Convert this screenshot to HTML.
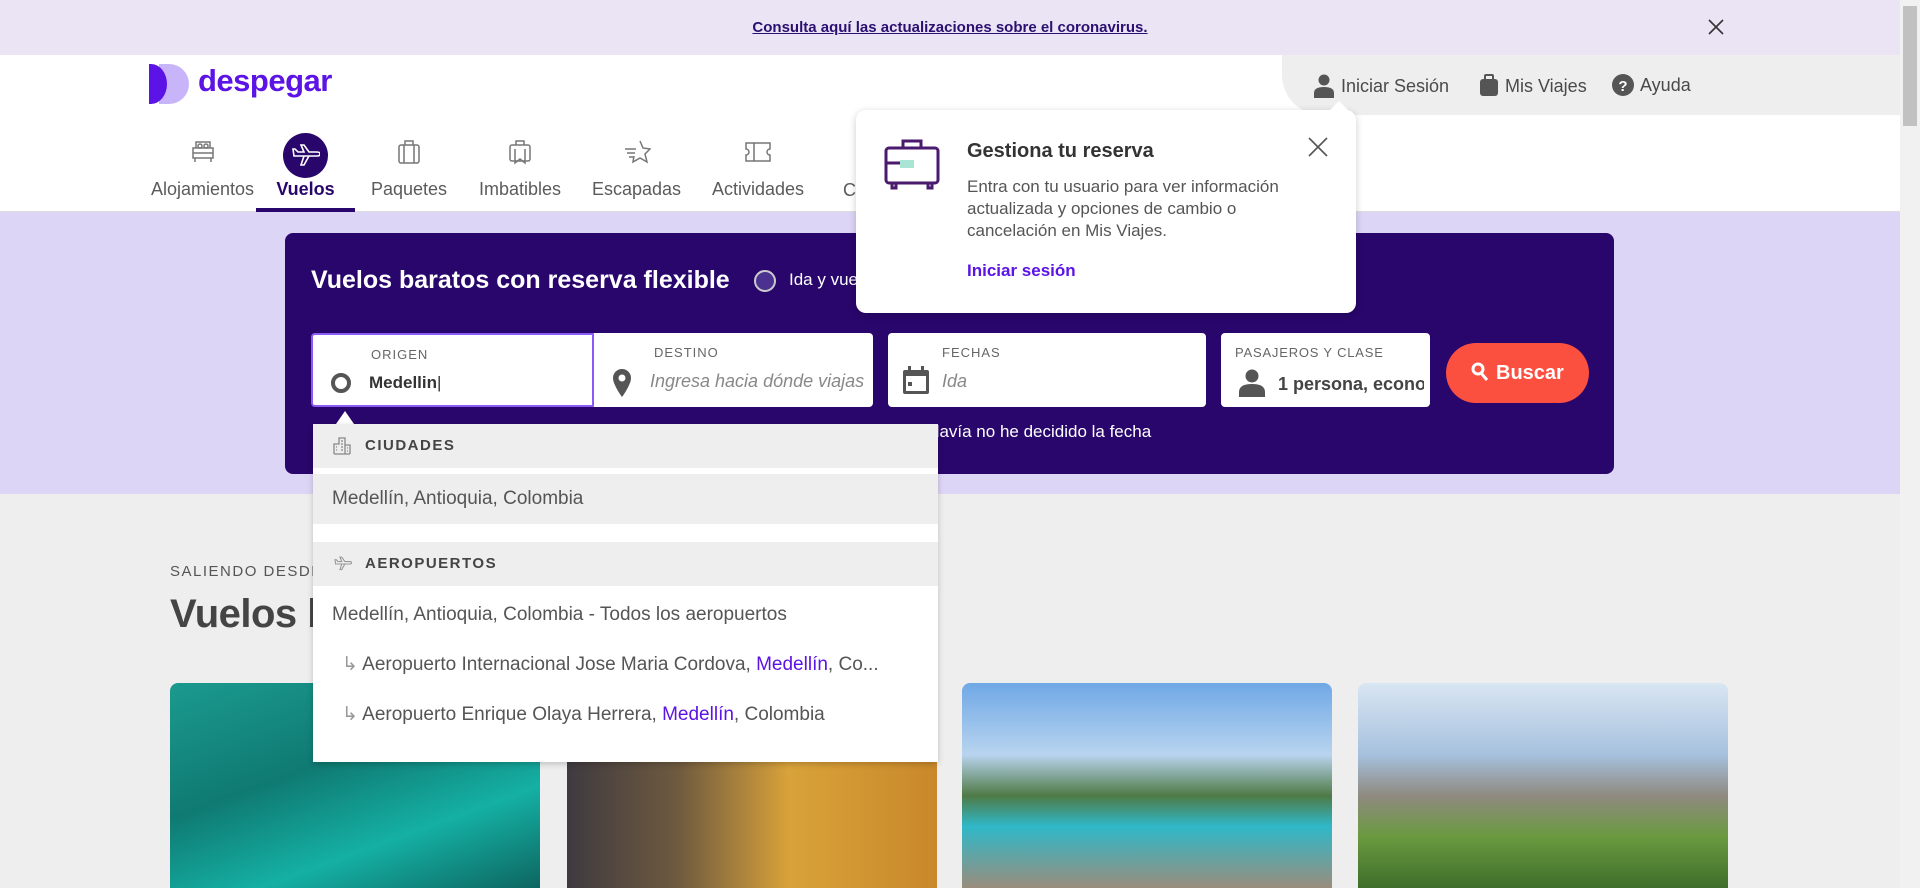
<!DOCTYPE html>
<html><head><meta charset="utf-8"><style>
*{box-sizing:border-box;margin:0;padding:0}
body{width:1920px;height:888px;overflow:hidden;font-family:"Liberation Sans",sans-serif;background:#eee;position:relative;color:#4d4d4d}
.abs{position:absolute}
.banner{left:0;top:0;width:1900px;height:55px;background:#ebe4f4;text-align:center;line-height:55px;font-size:15px;font-weight:bold;color:#2a1072}
.banner span{text-decoration:underline}
.header{left:0;top:55px;width:1900px;height:157px;background:#fff;border-bottom:1px solid #ddd}
.right{left:1282px;top:55px;width:618px;height:60px;background:#eee;border-bottom-left-radius:40px}
.right div{position:absolute;top:19px;font-size:18px;color:#4a4a4a;display:flex;align-items:center;gap:6px}
.nav{top:133px;text-align:center;font-size:18px;color:#5b5b5b}
.nav .ic{height:38px;display:flex;justify-content:center;align-items:center}
.band{left:0;top:212px;width:1900px;height:282px;background:#ddd5f5}
.box{left:285px;top:233px;width:1329px;height:241px;background:#29066b;border-radius:8px}
.inp{background:#fff;top:333px;height:74px;border-radius:4px}
.lbl{position:absolute;font-size:13px;letter-spacing:1px;color:#666;top:12px}
.val{position:absolute;top:38px;font-size:18px}
.dd{left:313px;top:424px;width:625px;height:338px;background:#fff;box-shadow:0 2px 6px rgba(0,0,0,.2);z-index:10}
.sec{height:44px;background:#eee;font-size:15px;font-weight:bold;letter-spacing:1.5px;color:#444;line-height:44px;padding-left:52px;position:relative}
.row{height:50px;line-height:50px;font-size:19px;color:#555;padding-left:19px}
.card{top:683px;width:370px;height:205px;border-radius:8px 8px 0 0;overflow:hidden}
.pop{left:856px;top:110px;width:500px;height:203px;background:#fff;border-radius:10px;box-shadow:0 2px 8px rgba(0,0,0,.2);z-index:10}
.sb{left:1900px;top:0;width:20px;height:888px;background:#f1f1f1}
</style></head><body>
<div class="abs banner"><span>Consulta aquí las actualizaciones sobre el coronavirus.</span></div>
<svg class="abs" style="left:1708px;top:19px" width="16" height="16" viewBox="0 0 16 16"><path d="M1 1L15 15M15 1L1 15" stroke="#333" stroke-width="1.6"/></svg>
<div class="abs header"></div>
<div class="abs right">
<div style="left:31px"><svg width="22" height="24" viewBox="0 0 22 24"><circle cx="11" cy="6" r="5.5" fill="#555"/><path d="M1 24v-5q0-6 10-6t10 6v5z" fill="#555"/></svg>Iniciar Sesión</div>
<div style="left:197px"><svg width="20" height="24" viewBox="0 0 20 24"><rect x="1" y="5" width="18" height="17" rx="3" fill="#555"/><rect x="6" y="1" width="8" height="5" rx="1" fill="none" stroke="#555" stroke-width="2"/></svg>Mis Viajes</div>
<div style="left:330px"><svg width="22" height="22" viewBox="0 0 22 22"><circle cx="11" cy="11" r="11" fill="#555"/><text x="11" y="17" font-size="15" font-weight="bold" fill="#fff" text-anchor="middle" font-family="Liberation Sans">?</text></svg>Ayuda</div>
</div>
<svg class="abs" style="left:149px;top:64px" width="42" height="40" viewBox="0 0 42 40"><path d="M10 0h10a20 20 0 0 1 0 40h-10z" fill="#c7b4f9"/><path d="M0 0h2a16 20 0 0 1 0 40h-2z" fill="#5b13e6"/></svg>
<div class="abs" style="left:198px;top:63px;font-size:31px;font-weight:bold;color:#5b13e6;letter-spacing:-.5px">despegar</div>
<div class="abs nav" style="left:149px;width:107px"><div class="ic"><svg width="26" height="24" viewBox="0 0 26 24" fill="none" stroke="#777" stroke-width="1.5"><rect x="3" y="8" width="20" height="10"/><path d="M3 13h20M5 18v4M21 18v4M6 8V2h14v6"/><circle cx="10" cy="6" r="2"/><circle cx="16" cy="6" r="2"/></svg></div><div style="margin-top:8px">Alojamientos</div></div>
<div class="abs" style="left:283px;top:133px;width:45px;height:45px;border-radius:50%;background:#29066b"></div>
<svg class="abs" style="left:292px;top:143px" width="28" height="26" viewBox="0 0 28 26" fill="none" stroke="#fff" stroke-width="1.6"><path d="M3 13h22q3 0 3-2t-3-2H17L12 2H9l3 7H6L3 6H1l1 7zM12 13l-3 9h3l5-9"/></svg>
<div class="abs" style="left:256px;top:179px;width:99px;text-align:center;font-size:18px;font-weight:bold;color:#29066b">Vuelos</div>
<div class="abs" style="left:256px;top:208px;width:99px;height:4px;background:#29066b"></div>
<div class="abs nav" style="left:369px;width:80px"><div class="ic"><svg width="24" height="26" viewBox="0 0 24 26" fill="none" stroke="#777" stroke-width="1.5"><rect x="2" y="6" width="20" height="18" rx="2"/><path d="M8 6V2h8v4M7 6v18M17 6v18"/></svg></div><div style="margin-top:8px">Paquetes</div></div>
<div class="abs nav" style="left:475px;width:90px"><div class="ic"><svg width="24" height="26" viewBox="0 0 24 26" fill="none" stroke="#777" stroke-width="1.5"><rect x="2" y="6" width="20" height="16" rx="2"/><path d="M8 6V2h8v4M7 10v14l5-4 5 4V10"/></svg></div><div style="margin-top:8px">Imbatibles</div></div>
<div class="abs nav" style="left:590px;width:93px"><div class="ic"><svg width="28" height="24" viewBox="0 0 28 24" fill="none" stroke="#777" stroke-width="1.5"><path d="M17 1l3 7 7 1-5 5 2 8-7-4-7 4 1-6M2 9h11M4 13h8M6 17h5"/></svg></div><div style="margin-top:8px">Escapadas</div></div>
<div class="abs nav" style="left:708px;width:100px"><div class="ic"><svg width="28" height="22" viewBox="0 0 28 22" fill="none" stroke="#777" stroke-width="1.5"><path d="M2 2h24v6a3 3 0 0 0 0 6v6H2v-6a3 3 0 0 0 0-6zM10 2v18"/></svg></div><div style="margin-top:8px">Actividades</div></div>
<div class="abs nav" style="left:843px;top:180px">C</div>
<div class="abs band"></div>
<div class="abs box"></div>
<div class="abs" style="left:311px;top:266px;font-size:25px;font-weight:bold;color:#fff">Vuelos baratos con reserva flexible</div>
<div class="abs" style="left:754px;top:270px;width:22px;height:22px;border-radius:50%;border:2px solid #ccc;background:#4b3190"></div>
<div class="abs" style="left:789px;top:270px;font-size:17px;color:#fff">Ida y vue</div>
<div class="abs inp" style="left:311px;width:283px;border:2px solid #8a5cf5;border-radius:4px 0 0 4px"><div class="lbl" style="left:58px">ORIGEN</div><div class="abs" style="left:18px;top:38px;width:20px;height:20px;border-radius:50%;border:4px solid #555"></div><div class="val" style="left:56px;color:#333;font-weight:bold;font-size:17px">Medellin<span style="font-weight:normal">|</span></div></div>
<div class="abs inp" style="left:594px;width:279px;border-radius:0 4px 4px 0"><div class="lbl" style="left:60px">DESTINO</div><svg class="abs" style="left:18px;top:36px" width="20" height="28" viewBox="0 0 20 28"><path d="M10 0a9 9 0 0 0-9 9c0 7 9 19 9 19s9-12 9-19a9 9 0 0 0-9-9z" fill="#555"/><circle cx="10" cy="9" r="3.5" fill="#fff"/></svg><div class="val" style="left:56px;font-style:italic;color:#888;white-space:nowrap;width:214px;overflow:hidden">Ingresa hacia dónde viajas</div></div>
<div class="abs inp" style="left:888px;width:318px"><div class="lbl" style="left:54px">FECHAS</div><svg class="abs" style="left:14px;top:32px" width="28" height="30" viewBox="0 0 28 30"><rect x="1" y="5" width="26" height="24" rx="2" fill="#555"/><rect x="4" y="11" width="20" height="15" fill="#fff"/><rect x="6" y="17" width="4" height="4" fill="#555"/><rect x="6" y="1" width="3" height="6" fill="#555"/><rect x="19" y="1" width="3" height="6" fill="#555"/></svg><div class="val" style="left:54px;font-style:italic;color:#888">Ida</div></div>
<div class="abs inp" style="left:1221px;width:209px"><div class="lbl" style="left:14px;letter-spacing:.8px">PASAJEROS Y CLASE</div><svg class="abs" style="left:18px;top:36px" width="26" height="28" viewBox="0 0 26 28"><circle cx="13" cy="7" r="6.5" fill="#555"/><path d="M0 28v-5q0-8 13-8t13 8v5z" fill="#555"/></svg><div class="val" style="left:57px;top:41px;font-weight:bold;color:#444;white-space:nowrap;width:146px;overflow:hidden">1 persona, economy</div></div>
<div class="abs" style="left:1446px;top:343px;width:143px;height:60px;border-radius:30px;background:#fb5040;color:#fff;font-size:20px;font-weight:bold;line-height:60px;padding-left:50px">Buscar</div>
<svg class="abs" style="left:1471px;top:362px" width="18" height="20" viewBox="0 0 18 20" fill="none" stroke="#fff" stroke-width="3"><circle cx="7" cy="7" r="5"/><path d="M10 11l6 7"/></svg>
<div class="abs" style="left:930px;top:422px;font-size:17px;color:#fff">davía no he decidido la fecha</div>
<div class="abs" style="left:170px;top:563px;font-size:15px;letter-spacing:1.5px;color:#555">SALIENDO DESDE</div>
<div class="abs" style="left:170px;top:592px;font-size:40px;font-weight:bold;color:#444;letter-spacing:-.5px">Vuelos baratos</div>
<div class="abs" style="left:915px;top:592px;font-size:40px;font-weight:bold;color:#444">s</div>
<div class="abs card" style="left:170px;background:linear-gradient(160deg,#1b9a8f,#0f7a72 40%,#15b0a4 70%,#0d6660)"></div>
<div class="abs card" style="left:567px;background:linear-gradient(90deg,#3f3a40,#6e5a3f 30%,#d9a23a 60%,#c9882a)"></div>
<div class="abs card" style="left:962px;background:linear-gradient(180deg,#6fa8e6 0%,#b8d4ef 35%,#4f7a46 55%,#2fb8c8 70%,#9a8d7d 100%)"></div>
<div class="abs card" style="left:1358px;background:linear-gradient(180deg,#d9e6f2 0%,#a6c1de 35%,#8f8a80 55%,#6a9a3f 75%,#3e6e2a 100%)"></div>
<div class="abs" style="left:336px;top:411px;width:0;height:0;border-left:9px solid transparent;border-right:9px solid transparent;border-bottom:13px solid #fff;z-index:10"></div>
<div class="abs dd">
<div class="sec"><svg class="abs" style="left:20px;top:13px" width="18" height="18" viewBox="0 0 18 18" fill="none" stroke="#888" stroke-width="1.3"><path d="M1 17V7h5V1h6v16M12 8h5v9M1 17h16M3 10h1M3 13h1M8 4h2M8 7h2M8 10h2M8 13h2M14 11h1M14 14h1"/></svg>CIUDADES</div>
<div style="height:6px"></div>
<div class="row" style="background:#eee">Medellín, Antioquia, Colombia</div>
<div style="height:18px"></div>
<div class="sec"><svg class="abs" style="left:20px;top:14px" width="20" height="16" viewBox="0 0 28 26" fill="none" stroke="#999" stroke-width="1.8"><path d="M3 13h22q3 0 3-2t-3-2H17L12 2H9l3 7H6L3 6H1l1 7zM12 13l-3 9h3l5-9"/></svg>AEROPUERTOS</div>
<div class="row" style="margin-top:4px">Medellín, Antioquia, Colombia - Todos los aeropuertos</div>
<div class="row" style="padding-left:29px;white-space:nowrap"><span style="color:#999">↳ </span>Aeropuerto Internacional Jose Maria Cordova, <span style="color:#5b13e6">Medellín</span>, Co...</div>
<div class="row" style="padding-left:29px"><span style="color:#999">↳ </span>Aeropuerto Enrique Olaya Herrera, <span style="color:#5b13e6">Medellín</span>, Colombia</div>
</div>
<div class="abs pop">
<svg class="abs" style="left:28px;top:28px" width="56" height="52" viewBox="0 0 56 52" fill="none" stroke="#4a1a6e" stroke-width="3"><rect x="2" y="10" width="52" height="35" rx="3"/><path d="M19 10V3h18v7M8 46v4h4v-4M44 46v4h4v-4"/><rect x="16" y="22" width="14" height="8" fill="#a9e4d5" stroke="none"/><path d="M2 25h14"/></svg>
<div class="abs" style="left:111px;top:30px;font-size:20px;font-weight:bold;color:#333">Gestiona tu reserva</div>
<div class="abs" style="left:111px;top:66px;font-size:17px;line-height:22px;color:#555;width:360px">Entra con tu usuario para ver información actualizada y opciones de cambio o cancelación en Mis Viajes.</div>
<div class="abs" style="left:111px;top:151px;font-size:17px;font-weight:bold;color:#5b13e6">Iniciar sesión</div>
<svg class="abs" style="left:452px;top:27px" width="20" height="20" viewBox="0 0 20 20"><path d="M1 1L19 19M19 1L1 19" stroke="#555" stroke-width="1.6"/></svg>
</div>
<div class="abs" style="left:1329px;top:101px;width:0;height:0;border-left:10px solid transparent;border-right:10px solid transparent;border-bottom:10px solid #fff;z-index:11"></div>
<div class="abs sb"><div style="margin:6px 3px;width:14px;height:120px;background:#c1c1c1"></div></div>
</body></html>
